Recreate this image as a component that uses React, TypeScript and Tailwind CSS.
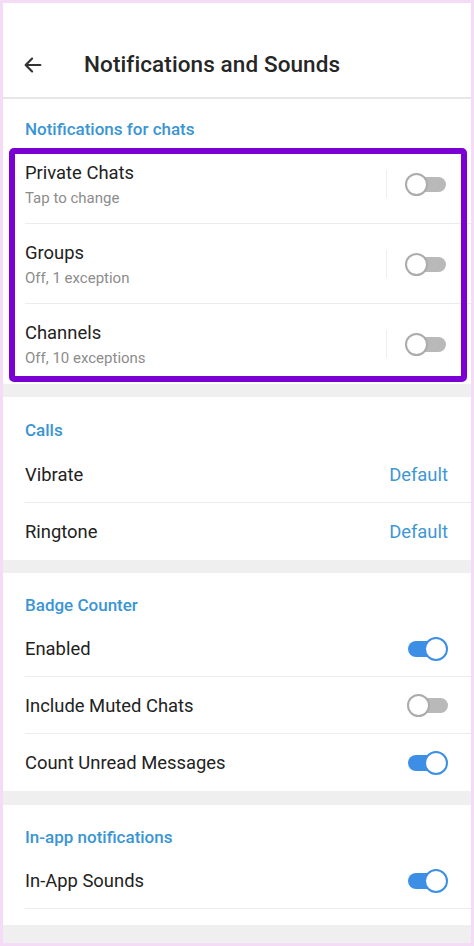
import React from "react";

type ToggleProps = { on: boolean };

const Toggle = ({ on }: ToggleProps) => {
  if (on) {
    return (
      <div className="relative w-[42px] h-[24px] flex items-center">
        <div className="ml-[2px] w-[34px] h-[16px] rounded-full bg-[#3d8fe6]" />
        <div className="absolute right-0 top-0 w-[24px] h-[24px] rounded-full bg-white border-2 border-[#3d8fe6]" />
      </div>
    );
  }
  return (
    <div className="relative w-[41px] h-[23px] flex items-center">
      <div className="ml-[6px] w-[35px] h-[15px] rounded-full bg-[#b9b9b9]" />
      <div className="absolute left-0 top-0 w-[23px] h-[23px] rounded-full bg-white border-2 border-[#ababab]" />
    </div>
  );
};

const SectionTitle = ({ text, h }: { text: string; h: string }) => (
  <div className={`flex items-end px-[22px] ${h}`}>
    <span className="text-[17px] leading-5 font-medium text-[#3a95d3]">{text}</span>
  </div>
);

const chatRows = [
  { title: "Private Chats", sub: "Tap to change" },
  { title: "Groups", sub: "Off, 1 exception" },
  { title: "Channels", sub: "Off, 10 exceptions" },
];

const Row = ({
  label,
  right,
  divider = true,
}: {
  label: string;
  right: React.ReactNode;
  divider?: boolean;
}) => (
  <div className="relative flex items-center justify-between h-[57px] pl-[22px] pr-[23px]">
    <span className="text-[18.4px] text-[#222]">{label}</span>
    {right}
    {divider && <div className="absolute left-[22px] right-0 bottom-0 h-px bg-[#ececec]" />}
  </div>
);

const Def = () => <span className="text-[18.4px] text-[#3e97d4]">Default</span>;

export default function App() {
  return (
    <div className="w-[474px] h-[946px] bg-[#f4dbf6] p-[3px] font-['Roboto',sans-serif] overflow-hidden">
      <div className="h-full bg-[#efefef] flex flex-col">
        {/* header */}
        <div className="h-[96px] shrink-0 bg-white flex items-center pt-[30px] border-b-2 border-[#e6e6e6]">
          <svg width="22" height="22" viewBox="0 0 24 24" className="ml-[19px]" fill="none" stroke="#333" strokeWidth="2.4" strokeLinecap="round" strokeLinejoin="round">
            <path d="M20 12H4.5" />
            <path d="M11 5l-7 7 7 7" />
          </svg>
          <h1 className="ml-[40px] text-[22.5px] font-medium text-[#262626] tracking-[0.1px]">Notifications and Sounds</h1>
        </div>

        {/* notifications for chats */}
        <div className="bg-white relative shrink-0">
          <SectionTitle text="Notifications for chats" h="h-[45px] pb-[5px]" />
          {chatRows.map((r, i) => (
            <div key={r.title} className="relative flex items-center h-[80px] pl-[22px] pr-[25px]">
              <div className="flex-1">
                <div className="text-[18.4px] leading-6 text-[#222]">{r.title}</div>
                <div className="mt-[3px] text-[15px] leading-5 text-[#8c8c8c]">{r.sub}</div>
              </div>
              <div className="w-px h-[28px] bg-[#eeeeee] mr-[18px]" />
              <Toggle on={false} />
              {i < 2 && <div className="absolute left-[22px] right-0 bottom-0 h-px bg-[#ececec]" />}
            </div>
          ))}
          {/* annotation box */}
          <div className="absolute left-[6px] top-[49px] w-[458px] h-[234px] border-[6px] border-[#7b00d4] rounded-[5px]" />
        </div>

        {/* calls */}
        <div className="mt-[13px] bg-white shrink-0">
          <SectionTitle text="Calls" h="h-[49px] pb-[6px]" />
          <Row label="Vibrate" right={<Def />} />
          <Row label="Ringtone" right={<Def />} divider={false} />
        </div>

        {/* badge counter */}
        <div className="mt-[13px] bg-white shrink-0">
          <SectionTitle text="Badge Counter" h="h-[47px] pb-[5px]" />
          <Row label="Enabled" right={<Toggle on />} />
          <Row label="Include Muted Chats" right={<Toggle on={false} />} />
          <Row label="Count Unread Messages" right={<Toggle on />} divider={false} />
        </div>

        {/* in-app */}
        <div className="mt-[14px] bg-white pb-[16px] shrink-0">
          <SectionTitle text="In-app notifications" h="h-[47px] pb-[5px]" />
          <Row label="In-App Sounds" right={<Toggle on />} />
        </div>
      </div>
    </div>
  );
}
